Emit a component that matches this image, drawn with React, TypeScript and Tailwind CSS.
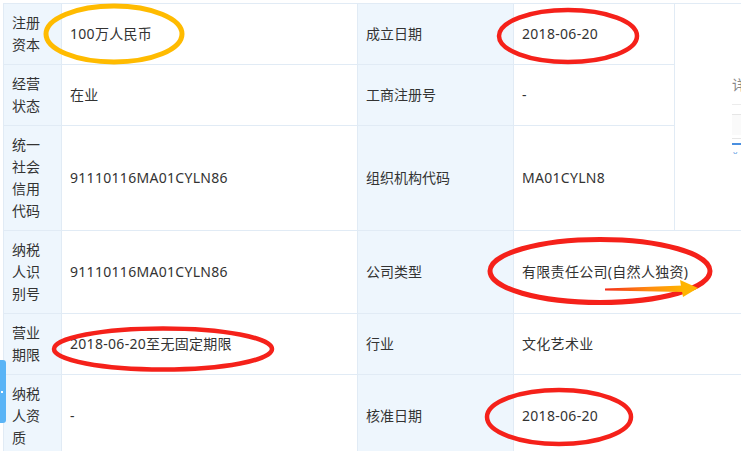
const label =
  "border border-[#e1ebf5] bg-[#eef6fd] px-2 align-middle text-[14px] leading-[22px] text-[#333]";
const value =
  "border border-[#e1ebf5] bg-white px-2 align-middle text-[14px] leading-[22px] tracking-[0.3px] text-[#333]";

const Marks = () => (
  <svg
    className="pointer-events-none absolute left-0 top-0"
    width={741}
    height={451}
    viewBox="0 0 741 451"
  >
    <defs>
      <linearGradient id="shaft" x1="0" x2="1" y1="0" y2="0">
        <stop offset="0" stopColor="#f22a1a" />
        <stop offset="0.55" stopColor="#ff8a10" />
        <stop offset="1" stopColor="#ffb400" />
      </linearGradient>
    </defs>
    <ellipse cx={114} cy={34} rx={68} ry={28} fill="none" stroke="#ffbb00" strokeWidth={5} />
    <ellipse cx={568} cy={36} rx={69} ry={26} fill="none" stroke="#f5211a" strokeWidth={4.5} />
    <ellipse cx={600} cy={271} rx={110} ry={31.5} fill="none" stroke="#f5211a" strokeWidth={5} />
    <ellipse cx={163} cy={349} rx={109} ry={20.5} fill="none" stroke="#f5211a" strokeWidth={4.5} />
    <ellipse cx={559} cy={417} rx={72} ry={27} fill="none" stroke="#f5211a" strokeWidth={4.5} />
    <polygon points="605,288.5 683,285.5 683,292 605,290.5" fill="url(#shaft)" />
    <polygon points="680,280 698,288 683,297" fill="#ffb400" />
  </svg>
);

const Label = ({ lines }: { lines: string[] }) => (
  <td className={label}>
    {lines.map((l) => (
      <div key={l}>{l}</div>
    ))}
  </td>
);

export default function App() {
  return (
    <div
      className="relative h-[451px] w-[741px] overflow-hidden bg-white pl-[3px] pt-[3px]"
      style={{ fontFamily: '"Noto Sans", "Noto Sans CJK SC", sans-serif' }}
    >
      <table className="w-[771px] table-fixed border-collapse">
        <colgroup>
          <col className="w-[58px]" />
          <col className="w-[296px]" />
          <col className="w-[156px]" />
          <col className="w-[161px]" />
          <col className="w-[100px]" />
        </colgroup>
        <tbody>
          <tr className="h-[61px]">
            <Label lines={["注册", "资本"]} />
            <td className={value}>100万人民币</td>
            <td className={label}>成立日期</td>
            <td className={value}>2018-06-20</td>
            <td rowSpan={3} className="border border-[#e1ebf5] bg-white align-middle">
              <div className="flex flex-col pb-[4px] pl-[57px]">
                <span className="text-[14px] leading-[18px] text-[#888]">详</span>
                <div className="mt-[10px] h-px w-[30px] bg-[#ececec]" />
                <div className="mt-[9px] h-px w-[30px] bg-[#e6e6e6]" />
                <div className="h-[20px] w-[30px] bg-[#fafafa]" />
                <div className="mt-[3px] h-px w-[30px] bg-[#e6e6e6]" />
                <div className="mt-[4px] h-[2px] w-[30px] bg-[#4a8fe0]" />
                <span className="mt-[4px] pl-[1px] text-[7px] leading-[6px] text-[#4a8fe0]">ᴗ</span>
              </div>
            </td>
          </tr>
          <tr className="h-[61px]">
            <Label lines={["经营", "状态"]} />
            <td className={value}>在业</td>
            <td className={label}>工商注册号</td>
            <td className={value}>-</td>
          </tr>
          <tr className="h-[105px]">
            <Label lines={["统一", "社会", "信用", "代码"]} />
            <td className={value}>91110116MA01CYLN86</td>
            <td className={label}>组织机构代码</td>
            <td className={value}>MA01CYLN8</td>
          </tr>
          <tr className="h-[83px]">
            <Label lines={["纳税", "人识", "别号"]} />
            <td className={value}>91110116MA01CYLN86</td>
            <td className={label}>公司类型</td>
            <td colSpan={2} className={value}>
              有限责任公司(自然人独资)
            </td>
          </tr>
          <tr className="h-[61px]">
            <Label lines={["营业", "期限"]} />
            <td className={value}>2018-06-20至无固定期限</td>
            <td className={label}>行业</td>
            <td colSpan={2} className={value}>
              文化艺术业
            </td>
          </tr>
          <tr className="h-[83px]">
            <Label lines={["纳税", "人资", "质"]} />
            <td className={value}>-</td>
            <td className={label}>核准日期</td>
            <td colSpan={2} className={value}>
              2018-06-20
            </td>
          </tr>
        </tbody>
      </table>
      <div className="absolute left-0 top-[360px] h-[63px] w-[6px] rounded-r-[3px] bg-[#5ab4f6]">
        <div className="ml-px mt-[31px] h-[2px] w-[2px] bg-white" />
      </div>
      <Marks />
    </div>
  );
}
